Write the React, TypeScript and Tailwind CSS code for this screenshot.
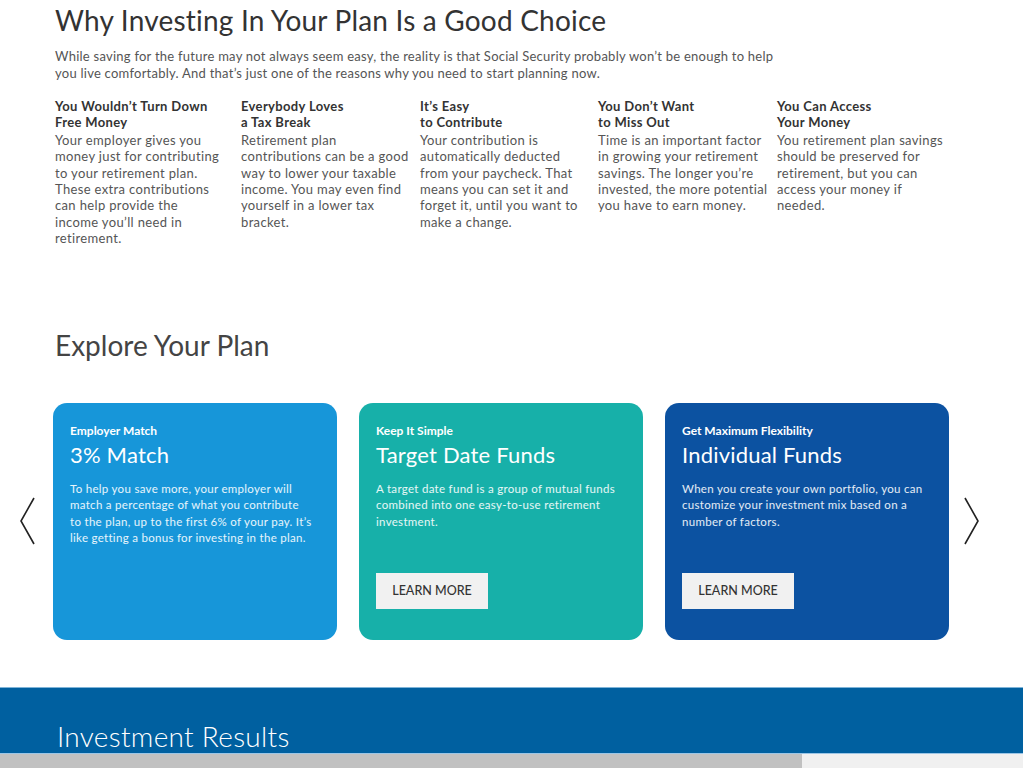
import React from 'react';

const reasons = [
  {
    title: ['You Wouldn’t Turn Down', 'Free Money'],
    body: 'Your employer gives you money just for contributing to your retirement plan. These extra contributions can help provide the income you’ll need in retirement.',
    w: 'w-[186px]',
    inner: 'w-[165px]',
  },
  {
    title: ['Everybody Loves', 'a Tax Break'],
    body: 'Retirement plan contributions can be a good way to lower your taxable income. You may even find yourself in a lower tax bracket.',
    w: 'w-[179px]',
    inner: 'w-[172px]',
  },
  {
    title: ['It’s Easy', 'to Contribute'],
    body: 'Your contribution is automatically deducted from your paycheck. That means you can set it and forget it, until you want to make a change.',
    w: 'w-[178px]',
    inner: 'w-[172px]',
  },
  {
    title: ['You Don’t Want', 'to Miss Out'],
    body: 'Time is an important factor in growing your retirement savings. The longer you’re invested, the more potential you have to earn money.',
    w: 'w-[179px]',
    inner: 'w-[172px]',
  },
  {
    title: ['You Can Access', 'Your Money'],
    body: 'You retirement plan savings should be preserved for retirement, but you can access your money if needed.',
    w: 'w-[179px]',
    inner: 'w-[172px]',
  },
];

// card copy keeps the same line breaks as the live page
const cards = [
  {
    label: 'Employer Match',
    title: '3% Match',
    lines: [
      'To help you save more, your employer will',
      'match a percentage of what you contribute',
      'to the plan, up to the first 6% of your pay. It’s',
      'like getting a bonus for investing in the plan.',
    ],
    bg: 'bg-[#1796d9]',
    button: false,
  },
  {
    label: 'Keep It Simple',
    title: 'Target Date Funds',
    lines: [
      'A target date fund is a group of mutual funds',
      'combined into one easy-to-use retirement',
      'investment.',
    ],
    bg: 'bg-[#17b0a9]',
    button: true,
  },
  {
    label: 'Get Maximum Flexibility',
    title: 'Individual Funds',
    lines: [
      'When you create your own portfolio, you can',
      'customize your investment mix based on a',
      'number of factors.',
    ],
    bg: 'bg-[#0c52a1]',
    button: true,
  },
];

export default function App() {
  return (
    <main className="w-[1023px] h-[768px] overflow-hidden bg-white font-['Lato',sans-serif] text-[#333]">
      <section className="px-[55px] pt-[3px]">
        <h1 className="text-[28px] leading-[34px] text-[#333] tracking-[0.2px]">
          Why Investing In Your Plan Is a Good Choice
        </h1>
        <p className="mt-[11px] w-[725px] text-[13px] leading-[16.5px] tracking-[0.25px] text-[#555]">
          While saving for the future may not always seem easy, the reality is that Social Security probably won’t be enough to help you live comfortably. And that’s just one of the reasons why you need to start planning now.
        </p>
        <div className="mt-[17px] flex">
          {reasons.map((r) => (
            <div key={r.body} className={`${r.w} text-[13px] leading-[16.4px] tracking-[0.35px]`}>
              <div className={r.inner}>
                <div className="font-bold text-[#333]">
                  {r.title[0]}
                  <br />
                  {r.title[1]}
                </div>
                <div className="mt-[1px] text-[#555]">{r.body}</div>
              </div>
            </div>
          ))}
        </div>
      </section>

      <section className="pt-[81px]">
        <h2 className="px-[55px] text-[28px] leading-[34px] text-[#444]">Explore Your Plan</h2>
        <div className="mt-[41px] flex items-center">
          <div className="w-[53px] flex justify-center">
            <svg width="18" height="50" viewBox="0 0 18 50" fill="none" stroke="#222" strokeWidth="1.6">
              <path d="M16 2 L3 25 L16 48" />
            </svg>
          </div>
          <div className="flex gap-[22px]">
            {cards.map((c) => (
              <div key={c.title} className={`${c.bg} w-[284px] h-[237px] rounded-[14px] px-[17px] pt-[20px] text-white`}>
                <div className="text-[12px] font-bold leading-[16px]">{c.label}</div>
                <div className="mt-[2px] text-[22px] leading-[28px] tracking-[0.2px]">{c.title}</div>
                <p className="mt-[12px] text-[11.5px] leading-[16.5px] tracking-[0.3px] text-white/90 whitespace-nowrap">
                  {c.lines.map((l) => (
                    <span key={l} className="block">
                      {l}
                    </span>
                  ))}
                </p>
                {c.button && (
                  <div className="mt-[43px] w-[112px] h-[36px] bg-[#f1f1f1] flex items-center justify-center text-[12.5px] font-medium text-[#333]">
                    LEARN MORE
                  </div>
                )}
              </div>
            ))}
          </div>
          <div className="w-[46px] flex justify-center">
            <svg width="18" height="50" viewBox="0 0 18 50" fill="none" stroke="#222" strokeWidth="1.6">
              <path d="M2 2 L15 25 L2 48" />
            </svg>
          </div>
        </div>
      </section>

      <section className="mt-[47px] h-[66px] bg-[#0060a0] border-t border-[#7fb4d8] flex items-end px-[57px] pb-[1px]">
        <h2 className="text-[28px] leading-[32px] font-light tracking-[0.3px] text-white">Investment Results</h2>
      </section>
      <div className="h-[15px] flex border-t border-[#9cc6e6]">
        <div className="w-[802px] bg-[#c1c1c1]" />
        <div className="flex-1 bg-[#f0f0f0]" />
      </div>
    </main>
  );
}
